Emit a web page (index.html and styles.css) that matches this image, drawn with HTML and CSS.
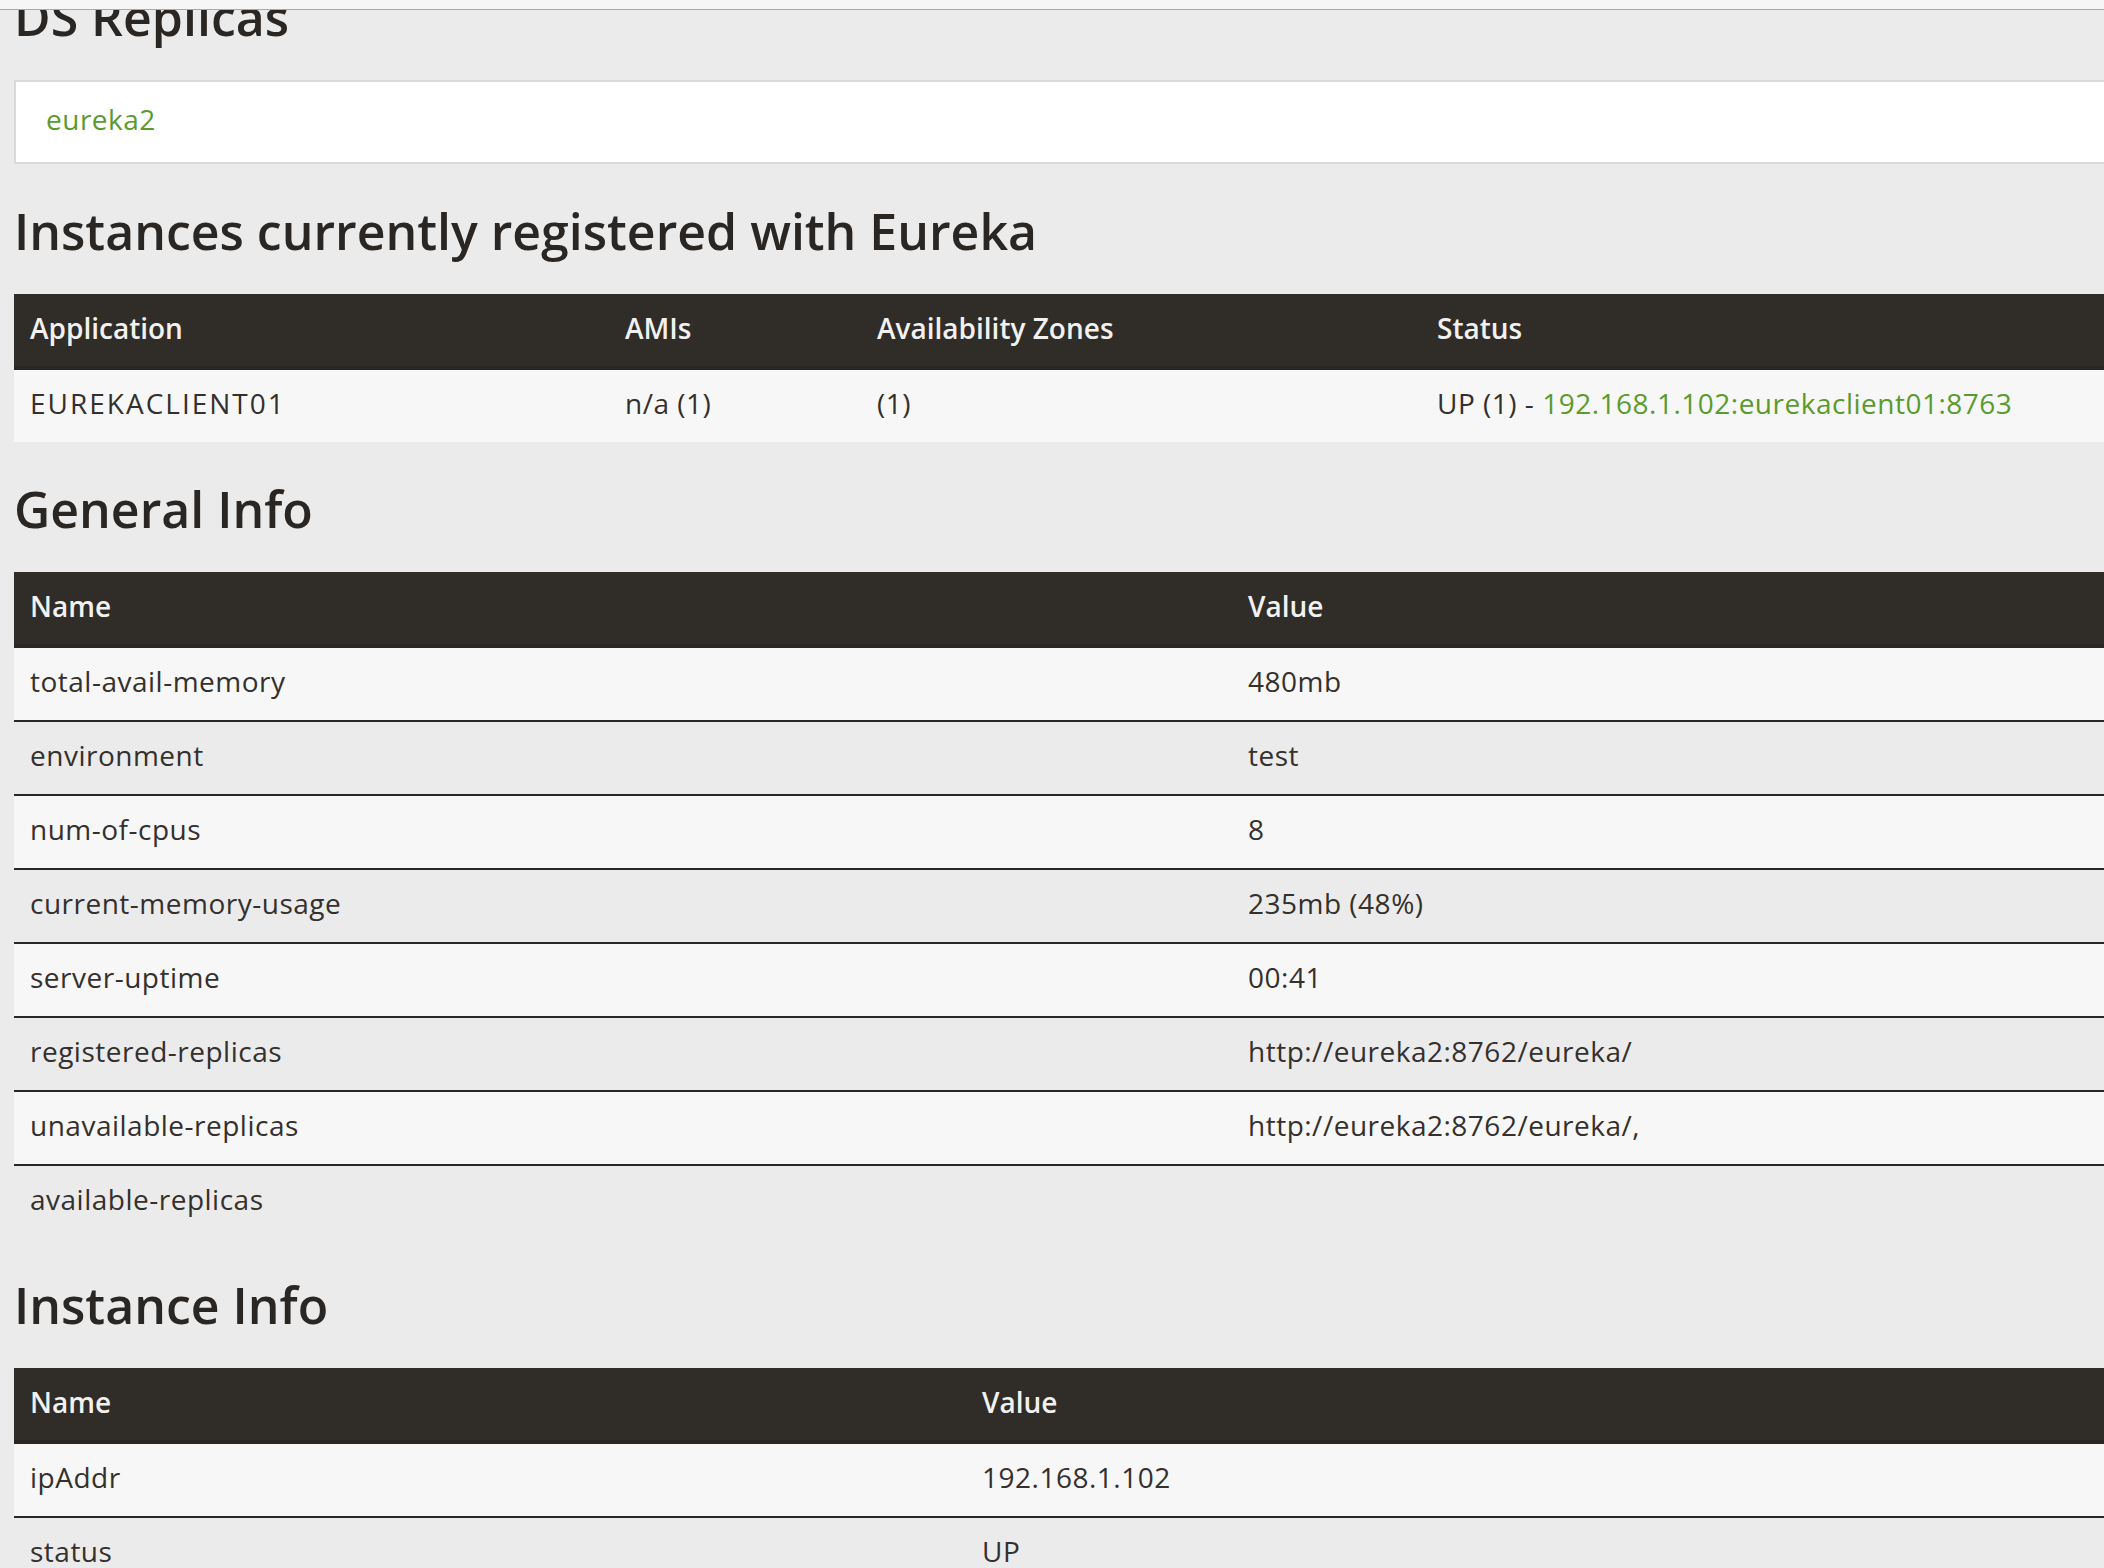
FILE: index.html
```html
<!DOCTYPE html>
<html lang="en">
<head>
<meta charset="utf-8">
<title>Eureka</title>
<link rel="stylesheet" href="styles.css">
</head>
<body>
<div class="chrome"></div>
<div class="page">
  <h2 class="title first">DS Replicas</h2>
  <ul class="list-group">
    <li class="list-group-item"><a class="link" href="#">eureka2</a></li>
  </ul>

  <h2 class="title">Instances currently registered with Eureka</h2>
  <table class="grid">
    <colgroup>
      <col class="c-app"><col class="c-ami"><col class="c-az"><col>
    </colgroup>
    <thead>
      <tr><th>Application</th><th>AMIs</th><th>Availability Zones</th><th>Status</th></tr>
    </thead>
    <tbody>
      <tr><td><span class="caps">EUREKACLIENT01</span></td><td>n/a (1)</td><td>(1)</td><td>UP (1) - <a class="link" href="#">192.168.1.102:eurekaclient01:8763</a></td></tr>
    </tbody>
  </table>

  <h2 class="title">General Info</h2>
  <table class="grid">
    <colgroup>
      <col class="c-gen"><col>
    </colgroup>
    <thead>
      <tr><th>Name</th><th>Value</th></tr>
    </thead>
    <tbody>
      <tr><td>total-avail-memory</td><td>480mb</td></tr>
      <tr><td>environment</td><td>test</td></tr>
      <tr><td>num-of-cpus</td><td>8</td></tr>
      <tr><td>current-memory-usage</td><td>235mb (48%)</td></tr>
      <tr><td>server-uptime</td><td>00:41</td></tr>
      <tr><td>registered-replicas</td><td>http://eureka2:8762/eureka/</td></tr>
      <tr><td>unavailable-replicas</td><td>http://eureka2:8762/eureka/,</td></tr>
      <tr><td>available-replicas</td><td></td></tr>
    </tbody>
  </table>

  <h2 class="title">Instance Info</h2>
  <table class="grid">
    <colgroup>
      <col class="c-inst"><col>
    </colgroup>
    <thead>
      <tr><th>Name</th><th>Value</th></tr>
    </thead>
    <tbody>
      <tr><td>ipAddr</td><td>192.168.1.102</td></tr>
      <tr><td>status</td><td>UP</td></tr>
    </tbody>
  </table>
</div>
</body>
</html>
```

FILE: styles.css
```css
html, body {
  margin: 0;
  padding: 0;
  overflow: hidden;
  background: #ebebeb;
}

body {
  font-family: "Open Sans", "Liberation Sans", sans-serif;
  font-size: 28px;
  line-height: 40px;
  color: #34302d;
  letter-spacing: 0.5px;
}

.chrome {
  position: fixed;
  top: 0;
  left: 0;
  right: 0;
  height: 9px;
  background: #f6f6f6;
  border-bottom: 1px solid #a9a9a9;
  z-index: 10;
}

.page {
  margin-left: 14px;
  width: 2300px;
  margin-top: -50px;
}

.title {
  font-size: 50px;
  line-height: 55px;
  font-weight: 600;
  letter-spacing: 0;
  margin: 40px 0 35px;
  color: #2a2623;
}

.list-group {
  list-style: none;
  margin: 35px 0 0;
  padding: 0;
}

.list-group-item {
  background: #ffffff;
  border: 2px solid #dadada;
  padding: 17px 30px 23px;
}

.link {
  color: #5a9b2f;
  text-decoration: none;
}

.caps {
  letter-spacing: 2px;
}

.grid {
  width: 100%;
  border-collapse: collapse;
  table-layout: fixed;
}

.grid th {
  background: #302c28;
  color: #f1f1f1;
  font-weight: 600;
  letter-spacing: 0;
  text-align: left;
  padding: 14px 16px 18px;
  height: 40px;
  border-bottom: 4px solid #292623;
}

.grid td {
  padding: 13px 16px 19px;
  height: 40px;
  white-space: nowrap;
  border-top: 2px solid #2a2623;
}

.grid tbody tr:first-child td {
  border-top: 0;
}

.grid tbody tr:nth-child(odd) td {
  background: #f7f7f7;
}

.grid tbody tr:nth-child(even) td {
  background: #ebebeb;
}

.c-app { width: 595px; }
.c-ami { width: 252px; }
.c-az { width: 560px; }
.c-gen { width: 1218px; }
.c-inst { width: 952px; }
```
